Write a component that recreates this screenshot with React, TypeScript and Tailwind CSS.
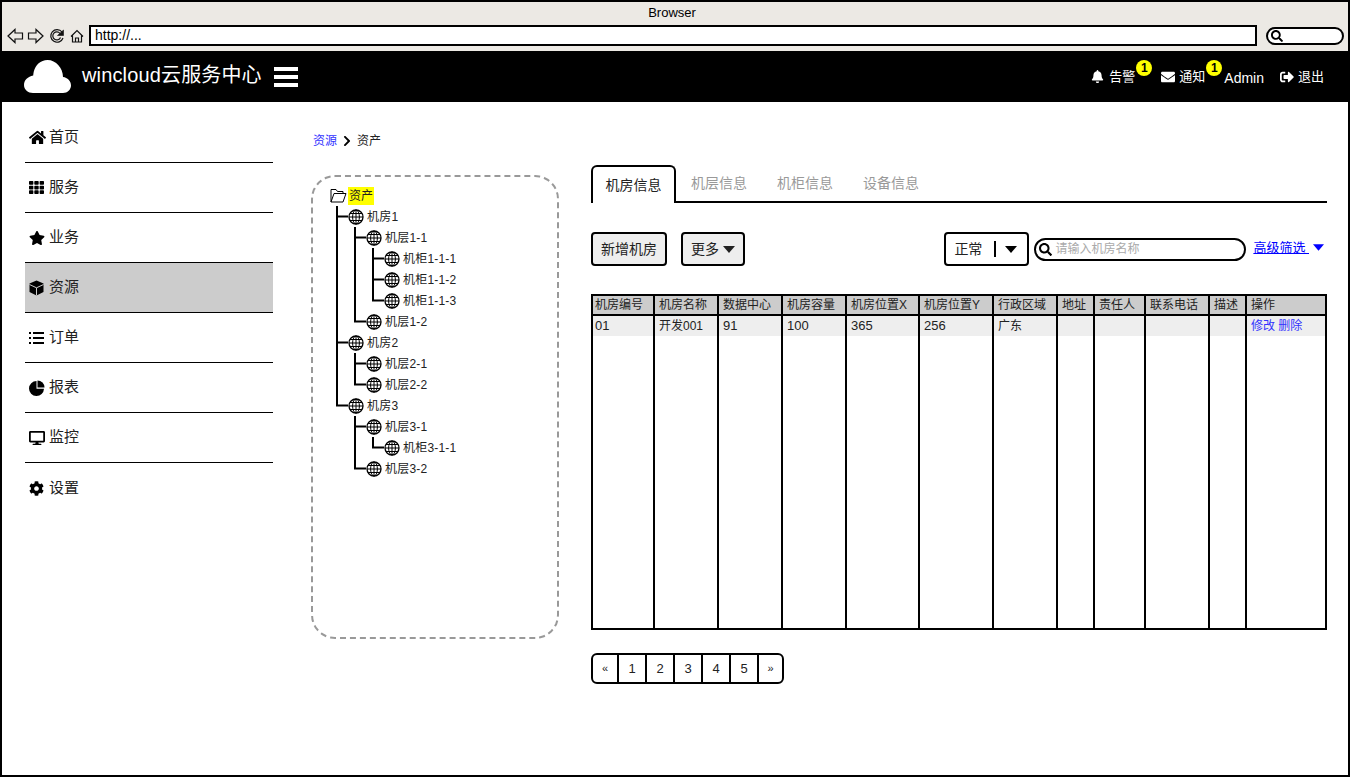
import type { ReactNode } from 'react'
import {
  FaBell,
  FaChevronRight,
  FaCog,
  FaDesktop,
  FaEnvelope,
  FaHome,
  FaSearch,
  FaSignOutAlt,
  FaStar,
  FaTh,
} from 'react-icons/fa'

const font = "font-['Liberation_Sans','Noto_Sans_CJK_SC',sans-serif]"

const menu = [
  { label: '首页', icon: <FaHome size={17} /> },
  { label: '服务', icon: <FaTh size={15} /> },
  { label: '业务', icon: <FaStar size={16} /> },
  {
    label: '资源',
    icon: (
      <svg width="15" height="16" viewBox="0 0 15 16">
        <path d="M7.500 0.500L14.500 3.500V12L7.500 15.500L0.500 12V3.500Z" fill="#000" />
        <path d="M0.500 4.500L7.500 7.800L14.500 4.500M7.500 7.800V15.500" fill="none" stroke="#ccc" strokeWidth="1" />
      </svg>
    ),
    active: true,
  },
  {
    label: '订单',
    icon: (
      <svg width="15" height="12" viewBox="0 0 15 12" fill="#000">
        <path d="M0 0H2V2H0ZM0 5H2V7H0ZM0 10H2V12H0ZM4 0H15V2H4ZM4 5H15V7H4ZM4 10H15V12H4Z" />
      </svg>
    ),
  },
  {
    label: '报表',
    icon: (
      <svg width="16" height="16" viewBox="0 0 16 16" fill="#000">
        <path d="M7.500 1A7.500 7.500 0 1 0 15 8.800H7.500Z" />
        <path d="M8.500 0.500A7 7 0 0 1 15.500 7.500H8.500Z" />
      </svg>
    ),
  },
  { label: '监控', icon: <FaDesktop size={16} /> },
  { label: '设置', icon: <FaCog size={15} /> },
]

// guide cells: p = pipe, t = tee, l = elbow, n = empty
const tree: { label: string; guides: string }[] = [
  { label: '机房1', guides: 't' },
  { label: '机层1-1', guides: 'pt' },
  { label: '机柜1-1-1', guides: 'ppt' },
  { label: '机柜1-1-2', guides: 'ppt' },
  { label: '机柜1-1-3', guides: 'ppl' },
  { label: '机层1-2', guides: 'pl' },
  { label: '机房2', guides: 't' },
  { label: '机层2-1', guides: 'pt' },
  { label: '机层2-2', guides: 'pl' },
  { label: '机房3', guides: 'l' },
  { label: '机层3-1', guides: 'nt' },
  { label: '机柜3-1-1', guides: 'npl' },
  { label: '机层3-2', guides: 'nl' },
]

const columns = [
  { title: '机房编号', value: '01', w: 'w-[64px]' },
  { title: '机房名称', value: '开发001', w: 'w-[64px]' },
  { title: '数据中心', value: '91', w: 'w-[64px]' },
  { title: '机房容量', value: '100', w: 'w-[64px]' },
  { title: '机房位置X', value: '365', w: 'w-[73px]' },
  { title: '机房位置Y', value: '256', w: 'w-[74px]' },
  { title: '行政区域', value: '广东', w: 'w-[64px]' },
  { title: '地址', value: '', w: 'w-[37px]' },
  { title: '责任人', value: '', w: 'w-[51px]' },
  { title: '联系电话', value: '', w: 'w-[64px]' },
  { title: '描述', value: '', w: 'w-[37px]' },
  { title: '操作', value: '', w: 'w-[80px]' },
]

function Globe() {
  return (
    <svg width="16" height="16" viewBox="0 0 16 16" fill="none" stroke="#000" strokeWidth="1" className="shrink-0">
      <circle cx="8" cy="8" r="7" strokeWidth="1.3" />
      <ellipse cx="8" cy="8" rx="3.4" ry="7" />
      <path d="M8 1V15M1 8H15M2 4.500H14M2 11.500H14" />
    </svg>
  )
}

function Caret({ className = 'ml-[4px]', w = 12 }: { className?: string; w?: number }) {
  return (
    <svg width={w} height="7" viewBox="0 0 12 7" className={`shrink-0 ${className}`}>
      <path d="M0 0H12L6 7Z" fill="currentColor" />
    </svg>
  )
}

function Guide({ kind }: { kind: string }) {
  const d = {
    p: 'M7 0V21',
    t: 'M7 0V21M7 10.500H18',
    l: 'M7 0V10.500H18',
    n: '',
  }[kind]
  return (
    <svg width="18" height="21" viewBox="0 0 18 21" fill="none" stroke="#000" strokeWidth="2" className="shrink-0">
      <path d={d} />
    </svg>
  )
}

function TreeRow({ label, guides }: { label: string; guides: string }) {
  return (
    <div className="flex h-[21px] items-center">
      {guides.split('').map((g, i) => (
        <Guide key={i} kind={g} />
      ))}
      <Globe />
      <span className="ml-[3px] text-[12px] tracking-[0.2px] text-[#222]">{label}</span>
    </div>
  )
}

function Btn({ children }: { children: ReactNode }) {
  return (
    <button className="flex h-[34px] items-center rounded-[4px] border-2 border-black bg-[#eeeeee] px-[8px] text-[14px] text-[#222]">
      {children}
    </button>
  )
}

function Badge() {
  return (
    <span className="absolute -top-[7px] -right-[17px] flex h-4 w-4 items-center justify-center rounded-full bg-[#ffff00] text-[12px] font-bold text-black">
      1
    </span>
  )
}

function BrowserBar() {
  return (
    <div className="h-[49px] shrink-0 bg-[#ece9e4]">
      <div className="flex h-[22px] items-center justify-center pr-[6px] text-[13px] text-black">Browser</div>
      <div className="flex h-[27px] items-start pl-[5px]">
        <div className="mt-[2px] flex h-[20px] w-[82px] shrink-0 items-center">
          <svg width="78" height="18" viewBox="0 0 78 18" fill="none" stroke="#111" strokeWidth="1.2">
            <path d="M1 9L8 2.500V6H15.500V12H8V15.500Z" />
            <path d="M36 9L29 2.500V6H21.500V12H29V15.500Z" />
            <path d="M55 5A6.300 6.300 0 1 0 56 11" />
            <path d="M53 6.500A4 4 0 1 0 53.500 10.500" />
            <path d="M50.500 8.500H56.500V3Z" fill="#111" strokeWidth="0.6" />
            <path d="M64 9.500L70 3.500L76 9.500M65.500 8.500V15H74.500V8.500M68.500 15V11H71.500V15" />
          </svg>
        </div>
        <div className="mt-[1px] flex h-[21px] w-[1168px] shrink-0 items-center border-2 border-black bg-white pl-[4px] text-[14px] text-black">
          http://...
        </div>
        <div className="mt-[3px] ml-[9px] flex h-[18px] w-[78px] shrink-0 items-center rounded-full border-2 border-black bg-white pl-[3px]">
          <FaSearch size={12} />
        </div>
      </div>
    </div>
  )
}

function TopBar() {
  return (
    <header className="flex h-[51px] shrink-0 items-center bg-black pr-[24px] pl-[22px] text-white">
      <svg width="47" height="33" viewBox="0 0 47 33" fill="#fff" className="shrink-0">
        <path d="M9 33H39C43.500 33 47 29.500 47 25.500C47 21 43.500 17.500 39 17C39 8 32 0 23.500 0C16.500 0 11.500 5 9.800 11.500C9.500 13 9.300 14 9.200 15.500C4 16.500 0 20 0 25C0 29.500 4 33 9 33Z" />
      </svg>
      <span className="mb-[3px] ml-[11px] text-[20px] tracking-[0.15px]">wincloud云服务中心</span>
      <div className="ml-[12px] flex h-[20px] w-[24px] flex-col justify-between">
        <div className="h-[4px] bg-white" />
        <div className="h-[4px] bg-white" />
        <div className="h-[4px] bg-white" />
      </div>
      <div className="ml-auto flex items-center text-[13px]">
        <FaBell size={13} />
        <span className="relative ml-[5px]">
          告警
          <Badge />
        </span>
        <FaEnvelope size={14} className="ml-[26px]" />
        <span className="relative ml-[4px]">
          通知
          <Badge />
        </span>
        <span className="mt-[4px] ml-[19px] text-[14px]">Admin</span>
        <FaSignOutAlt size={14} className="ml-[16px]" />
        <span className="ml-[4px]">退出</span>
      </div>
    </header>
  )
}

function Sidebar() {
  return (
    <nav className="mt-[11px] w-[248px] shrink-0">
      {menu.map((m, i) => (
        <div
          key={m.label}
          className={`flex h-[50px] items-center pl-[4px] text-[15px] text-[#222] ${
            i < menu.length - 1 ? 'border-b border-black' : ''
          } ${m.active ? 'bg-[#cccccc]' : ''}`}
        >
          <span className="flex w-[20px] shrink-0 items-center text-black">{m.icon}</span>
          {m.label}
        </div>
      ))}
    </nav>
  )
}

function TreePanel() {
  return (
    <div className="h-[464px] w-[248px] shrink-0 rounded-[24px] border-2 border-dashed border-[#999999] pt-[8px] pl-[17px]">
      <div className="flex h-[21px] items-center">
        <svg width="17" height="15" viewBox="0 0 17 15" fill="none" stroke="#000" strokeWidth="1" className="shrink-0">
          <path d="M1 14V1.500H6L7.500 3.500H13V5.500M1 14L4 5.500H16L13 14Z" />
        </svg>
        <span className="ml-[1px] bg-[#ffff00] px-[1px] text-[12px] text-[#222]">资产</span>
      </div>
      {tree.map((row) => (
        <TreeRow key={row.label} {...row} />
      ))}
    </div>
  )
}

function Tabs() {
  const rest = ['机层信息', '机柜信息', '设备信息']
  return (
    <div className="flex h-[38px] border-b-2 border-black text-[14px]">
      <div className="flex h-[38px] w-[85px] items-center justify-center rounded-t-[6px] border-2 border-b-0 border-black bg-white text-[#222]">
        机房信息
      </div>
      {rest.map((t) => (
        <div key={t} className="flex h-[37px] w-[86px] items-center justify-center text-[#999999]">
          {t}
        </div>
      ))}
    </div>
  )
}

function Toolbar() {
  return (
    <div className="mt-[29px] flex h-[34px] items-center">
      <Btn>新增机房</Btn>
      <div className="ml-[14px]">
        <Btn>
          更多
          <Caret className="ml-[4px]" />
        </Btn>
      </div>
      <div className="ml-auto flex h-[34px] w-[85px] shrink-0 items-center rounded-[4px] border-2 border-black bg-white pl-[8px] text-[14px] text-[#222]">
        正常
        <span className="ml-[12px] h-[16px] w-[2px] bg-black" />
        <Caret className="ml-[9px] text-black" />
      </div>
      <div className="ml-[5px] flex h-[23px] w-[212px] shrink-0 items-center rounded-full border-2 border-black bg-white pl-[3px] text-[12px] text-[#aaaaaa]">
        <FaSearch size={13} className="shrink-0 text-black" />
        <span className="ml-[3px]">请输入机房名称</span>
      </div>
      <a className="mb-[2px] ml-[7px] whitespace-pre text-[13px] text-[#0000ff] underline">高级筛选 </a>
      <Caret className="mr-[3px] mb-[4px] ml-[4px] text-[#0000ff]" w={11} />
    </div>
  )
}

function DataTable() {
  return (
    <table className="mt-[28px] h-[336px] w-[736px] table-fixed border-separate border-spacing-0 border-t-2 border-b-2 border-black text-[12px] text-[#222]">
      <colgroup>
        {columns.map((c) => (
          <col key={c.title} className={c.w} />
        ))}
      </colgroup>
      <tbody>
        <tr className="h-[20px] bg-[#cccccc]">
          {columns.map((c, i) => (
            <td
              key={c.title}
              className={`overflow-hidden border-r-2 border-b-2 border-black whitespace-nowrap ${
                i === 0 ? 'border-l-2 pl-[2px]' : 'pl-[4px]'
              }`}
            >
              {c.title}
            </td>
          ))}
        </tr>
        <tr className="h-[20px] bg-[#eeeeee]">
          {columns.map((c, i) => (
            <td
              key={c.title}
              className={`border-r-2 border-black pt-[1px] align-top whitespace-nowrap ${
                i === 0 ? 'border-l-2 pl-[2px]' : 'pl-[4px]'
              } ${/^\d+$/.test(c.value) ? 'text-[13px] leading-[18px]' : ''}`}
            >
              {c.title === '操作' ? <span className="text-[#3333ff]">修改 删除</span> : c.value}
            </td>
          ))}
        </tr>
        <tr>
          {columns.map((c, i) => (
            <td key={c.title} className={`border-r-2 border-black ${i === 0 ? 'border-l-2' : ''}`} />
          ))}
        </tr>
      </tbody>
    </table>
  )
}

function Pagination() {
  const pages = ['«', '1', '2', '3', '4', '5', '»']
  return (
    <div className="mt-[23px] flex h-[31px] w-[193px] overflow-hidden rounded-[6px] border-2 border-black text-[#222]">
      {pages.map((p, i) => (
        <div
          key={p}
          className={`flex shrink-0 items-center justify-center ${
            i === 0 ? 'w-[26px] text-[11px]' : i === pages.length - 1 ? 'w-[23px] text-[11px]' : 'w-[28px] text-[13px]'
          } ${i === pages.length - 1 ? '' : 'border-r-2 border-black'}`}
        >
          {p}
        </div>
      ))}
    </div>
  )
}

export default function App() {
  return (
    <div className={`${font} flex h-[777px] w-[1350px] flex-col overflow-hidden border-2 border-black bg-white`}>
      <BrowserBar />
      <TopBar />
      <div className="flex flex-1 pl-[23px]">
        <Sidebar />
        <main className="ml-[38px] min-w-0 flex-1">
          <div className="mt-[31px] flex h-[16px] items-center pl-[2px] text-[12px] text-[#222]">
            <a className="text-[#3333ff]">资源</a>
            <FaChevronRight size={12} className="mr-[4px] ml-[4px] text-black" />
            资产
          </div>
          <div className="mt-[18px] flex">
            <div className="mt-[8px]">
              <TreePanel />
            </div>
            <section className="mt-[-2px] ml-[32px] w-[736px]">
              <Tabs />
              <Toolbar />
              <DataTable />
              <Pagination />
            </section>
          </div>
        </main>
      </div>
    </div>
  )
}
